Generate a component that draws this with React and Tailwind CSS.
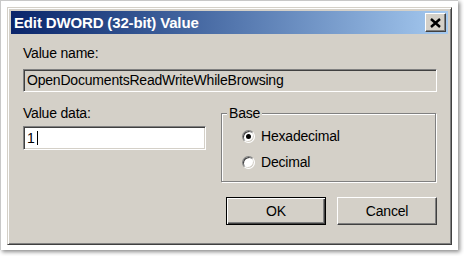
import React from 'react';

const sunken =
  'border border-t-[#808080] border-l-[#808080] border-r-white border-b-white shadow-[inset_1px_1px_0_#404040,inset_-1px_-1px_0_#d4d0c8]';

function Radio({ checked, label }) {
  return (
    <div className="flex items-center h-[15px]">
      <div className="w-[13px] h-[13px] rounded-full bg-white border border-t-[#808080] border-l-[#808080] border-r-white border-b-white shadow-[inset_1px_1px_0_#404040,inset_-1px_-1px_0_#d4d0c8] flex items-center justify-center">
        {checked && <div className="w-[5px] h-[5px] rounded-full bg-black" />}
      </div>
      <span className="ml-[6px] leading-[15px]">{label}</span>
    </div>
  );
}

export default function App() {
  return (
    <div className="w-[464px] h-[256px] bg-white overflow-hidden" style={{ fontFamily: '"Liberation Sans", Arial, sans-serif' }}>
      <div className="w-[458px] h-[250px] bg-white border-l border-t border-[#c8c8c8] shadow-[2px_2px_4px_rgba(0,0,0,0.45)] pl-[6px] pt-[6px]">
        {/* dialog window */}
        <div className="w-[445px] h-[238px] bg-[#d4d0c8] border border-t-[#d4d0c8] border-l-[#d4d0c8] border-r-[#404040] border-b-[#404040] shadow-[inset_1px_1px_0_#fff,inset_-1px_-1px_0_#808080] p-[3px] flex flex-col">
          <div className="h-[23px] flex items-center justify-between bg-gradient-to-r from-[#0a246a] to-[#a6caf0] pl-[3px]">
            <span className="text-white font-bold text-[15px] tracking-[-0.15px] leading-[17px]">Edit DWORD (32-bit) Value</span>
            <button className="w-[21px] h-[19px] mr-[2px] bg-[#d4d0c8] border border-t-white border-l-white border-r-[#404040] border-b-[#404040] shadow-[inset_-1px_-1px_0_#808080] flex items-center justify-center">
              <svg width="11" height="10" viewBox="0 0 11 10">
                <path d="M1 1 L10 9 M10 1 L1 9" stroke="#000" strokeWidth="2.4" />
              </svg>
            </button>
          </div>

          <div className="flex-1 pl-[12px] pr-[11px] pt-[12px] text-[14px] tracking-[-0.2px] text-black">
            <div className="h-[15px] leading-[15px]">Value name:</div>
            <div className={`mt-[8px] h-[23px] flex items-center px-[3px] bg-[#d4d0c8] leading-[15px] ${sunken}`}>
              OpenDocumentsReadWriteWhileBrowsing
            </div>

            <div className="flex mt-[14px]">
              <div className="w-[183px]">
                <div className="h-[15px] leading-[15px]">Value data:</div>
                <div className={`mt-[5px] h-[24px] flex items-center px-[3px] bg-white leading-[15px] ${sunken}`}>
                  <span>1</span>
                  <span className="w-[1px] h-[14px] bg-black ml-[2px]" />
                </div>
              </div>

              <div className="ml-[15px] w-[215px] mt-[7px] h-[69px] relative border border-[#808080] shadow-[inset_1px_1px_0_#fff,1px_1px_0_#fff] pl-[20px] pt-[15px]">
                <span className="absolute -top-[8px] left-[5px] px-[2px] bg-[#d4d0c8] leading-[15px]">Base</span>
                <Radio checked label="Hexadecimal" />
                <div className="mt-[11px]">
                  <Radio label="Decimal" />
                </div>
              </div>
            </div>

            <div className="flex justify-end gap-[11px] mt-[15px]">
              <button className="w-[100px] h-[28px] bg-[#d4d0c8] border border-black shadow-[inset_1px_1px_0_#fff,inset_-1px_-1px_0_#404040,inset_-2px_-2px_0_#808080] leading-[15px]">
                OK
              </button>
              <button className="w-[100px] h-[28px] bg-[#d4d0c8] border border-t-white border-l-white border-r-[#404040] border-b-[#404040] shadow-[inset_-1px_-1px_0_#808080] leading-[15px]">
                Cancel
              </button>
            </div>
          </div>
        </div>
      </div>
    </div>
  );
}
